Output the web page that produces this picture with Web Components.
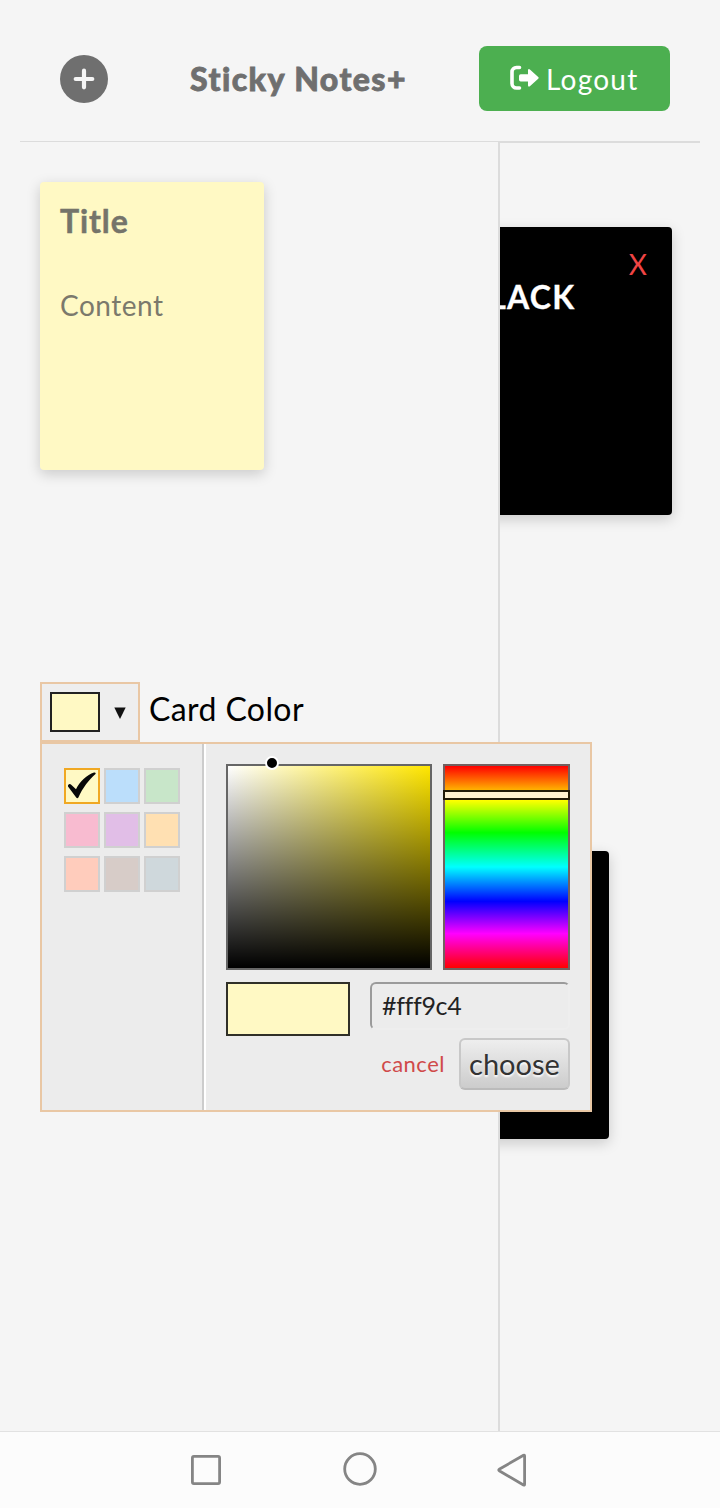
<!DOCTYPE html>
<html lang="en">
<head>
<meta charset="utf-8">
<title>Sticky Notes+</title>
<style>
body { margin: 0; background: #f5f5f5; font-family: Lato, "Noto Sans", sans-serif; }
</style>
</head>
<body>
<sticky-app></sticky-app>
<script>
const define = (name, html, setup) => {
  const template = document.createElement('template');
  template.innerHTML = html;
  customElements.define(name, class extends HTMLElement {
    constructor() {
      super();
      this.attachShadow({ mode: 'open' }).append(template.content.cloneNode(true));
    }
    connectedCallback() { if (setup) setup(this, this.shadowRoot); }
  });
};

define('app-header', `
<style>
:host { display: flex; box-sizing: border-box; height: 142px; margin: 0 20px; padding: 46px 30px 0 40px;
  justify-content: space-between; align-items: flex-start; border-bottom: 1px solid #dcdcdc; }
.add { width: 48px; height: 48px; margin-top: 9px; display: block; }
h1 { margin: 13px 0 0 10px; font-size: 32px; line-height: 40px; font-weight: 900; color: #6f6f6f; white-space: nowrap; letter-spacing: 1.42px; -webkit-text-stroke: .8px #6f6f6f; }
button { all: unset; box-sizing: border-box; width: 191px; height: 65px; border-radius: 8px; background: #4caf50; color: #fff;
  display: flex; align-items: center; padding-left: 31px; font-size: 28px; line-height: 36px; gap: 7px; white-space: nowrap; letter-spacing: 1.25px; }
button svg { width: 29px; height: 26px; margin-top: -2px; flex: none; }
</style>
<svg class="add" viewBox="0 0 48 48"><circle cx="24" cy="24" r="24" fill="#6f6f6f"/><path d="M24 15.7v16.6M15.7 24h16.6" stroke="#f5f5f5" stroke-width="4.2" stroke-linecap="round"/></svg>
<h1>Sticky Notes+</h1>
<button><svg viewBox="0 0 29 26"><path d="M9.5 2.5H6.5a4.5 4.5 0 0 0-4.5 4.5v11.500a4.500 4.500 0 0 0 4.500 4.500h3" fill="none" stroke="#fff" stroke-width="3.6" stroke-linecap="round"/><path d="M10.700 9.300h7.300V5.200q.3-1.800 1.900-.7l8.300 7.400q1 .9 0 1.900l-8.300 7.500q-1.600 1-1.900-.7v-4.200h-7.300q-1.700 0-1.700-1.700v-3.700q0-1.700 1.700-1.700z" fill="#fff"/></svg><span>Logout</span></button>`);

define('note-card', `
<style>
:host { display: block; box-sizing: border-box; width: 224px; height: 288px; border-radius: 4px; padding: 20px;
  background: var(--note, #fff9c4); box-shadow: 0 4px 14px rgba(0,0,0,.18); }
</style>
<slot></slot>`);

define('notes-board', `
<style>
:host { display: block; position: relative; overflow: hidden; }
.edge { height: 1px; margin-right: 20px; background: #dcdcdc; }
note-card { position: absolute; --note: #000; }
.first { left: -52px; top: 85px; }
.second { left: -115px; top: 709px; }
.close { display: block; text-align: right; color: #ef4444; font-size: 28px; line-height: 36px; padding-right: 5px; margin-top: -1px; }
h2 { margin: -4px 0 0 -1px; color: #fff; font-size: 32px; line-height: 38px; font-weight: 700; white-space: nowrap; letter-spacing: 1.2px; -webkit-text-stroke: .3px #fff; }
</style>
<div class="edge"></div>
<note-card class="first"><span class="close">X</span><h2>BLACK</h2></note-card>
<note-card class="second"></note-card>`);

define('color-palette', `
<style>
:host { display: grid; box-sizing: border-box; width: 160px; padding: 24px 22px; grid-template-columns: repeat(3, 36px);
  grid-auto-rows: 36px; gap: 8px 4px; align-content: start; }
i { box-sizing: border-box; border: 2px solid #d0d0d0; display: block; }
i.on { border-color: #f0a823; }
svg { display: block; width: 32px; height: 32px; }
</style>`, (host, root) => {
  ['#fff9c4', '#bbdefb', '#c8e6c9', '#f8bbd0', '#e1bee7', '#ffe0b2', '#ffccbc', '#d7ccc8', '#cfd8dc'].forEach((c, n) => {
    const cell = document.createElement('i');
    cell.style.background = c;
    if (!n) {
      cell.className = 'on';
      cell.innerHTML = '<svg viewBox="0 0 32 32"><path d="M2 15.200q1.500-2 3.200-.5l4.800 4.500C14 11.500 21 5 28 2.600q2.500-.3 1.500 1.500C23 10 16.500 18 12.400 27.500q-1.100 1.500-2.200 0Q6.500 22.500 2 16.500z" fill="#080808"/></svg>';
    }
    root.append(cell);
  });
});

define('color-popup', `
<style>
:host { display: flex; box-sizing: border-box; width: 552px; height: 370px; border: 2px solid #e9c7a4; background: #ececec; }
.picker { flex: 1; box-sizing: border-box; border-left: 2px solid #fff; box-shadow: -2px 0 0 #ccc; margin-left: 2px;
  padding: 20px; display: grid; grid-template-columns: 206px 127px; grid-template-rows: 206px 108px; gap: 12px 11px; }
.sat, .hue { box-sizing: border-box; border: 2px solid #666; position: relative; }
.sat { background: linear-gradient(to top, #000, transparent), linear-gradient(to right, #fff, #ffe600); background-origin: padding-box; }
.hue { border-color: #73605f; background: linear-gradient(#f00 0%, #ff0 17%, #0f0 33%, #0ff 50%, #00f 67%, #f0f 83%, #f00 100%); }
.dot { position: absolute; left: 37px; top: -10px; width: 10px; height: 10px; border: 2px solid #fff; border-radius: 50%; background: #000; }
.bar { position: absolute; box-sizing: border-box; left: -2px; right: -2px; top: 24px; height: 10px; border: 2px solid #211a08; background: #fff1cf; }
.bottom { grid-column: 1 / 3; display: flex; justify-content: space-between; align-items: flex-start; }
.preview { box-sizing: border-box; width: 124px; height: 54px; border: 2px solid #303028; background: #fff9c4; }
.side { width: 200px; }
.hex { box-sizing: border-box; height: 48px; border: 2px solid; border-color: #9b9b9b #eee #eee #9b9b9b; border-radius: 6px;
  padding: 3px 10px; font-size: 25px; line-height: 37px; color: #222; white-space: nowrap; letter-spacing: -.35px; }
.buttons { display: flex; justify-content: flex-end; align-items: center; margin-top: 8px; gap: 14px; }
.cancel { color: #d04a4a; font-size: 22px; line-height: 30px; white-space: nowrap; letter-spacing: .5px; }
.choose { box-sizing: border-box; width: 111px; height: 52px; border: 2px solid #c8c8c8; border-bottom-color: #bbb; border-radius: 6px;
  background: linear-gradient(#eee, #ccc); color: #333; text-shadow: 0 2px 2px #fff; font-size: 29px; line-height: 47px; text-align: center; white-space: nowrap; }
</style>
<color-palette></color-palette>
<div class="picker">
  <div class="sat"><div class="dot"></div></div>
  <div class="hue"><div class="bar"></div></div>
  <div class="bottom">
    <div class="preview"></div>
    <div class="side">
      <div class="hex"><span>#fff9c4</span></div>
      <div class="buttons"><span class="cancel">cancel</span><div class="choose"><span>choose</span></div></div>
    </div>
  </div>
</div>`);

define('color-field', `
<style>
:host { display: flex; position: relative; z-index: 2; height: 60px; gap: 9px; }
.trigger { box-sizing: border-box; width: 100px; height: 60px; border: 2px solid #e9c7a4; background: #eee; display: flex; padding: 8px; gap: 14px; }
.now { box-sizing: border-box; width: 50px; height: 40px; border: 2px solid #222; background: #fff9c4; }
.trigger svg { width: 12px; height: 12px; margin-top: 15px; }
.label { font-size: 32px; line-height: 40px; margin-top: 7px; color: #000; white-space: nowrap; letter-spacing: .4px; }
color-popup { position: absolute; left: 0; top: 60px; }
</style>
<div class="trigger"><div class="now"></div><svg viewBox="0 0 12 12"><path d="M.3.500h11.400L6 12z" fill="#111"/></svg></div>
<span class="label">Card Color</span>
<color-popup></color-popup>`);

define('note-editor', `
<style>
:host { display: block; box-sizing: border-box; border-right: 2px solid #dcdcdc; padding: 40px 0 0 40px; }
h2 { margin: -1px 0 0; font-size: 32px; line-height: 40px; font-weight: 700; color: #75746a; letter-spacing: .9px; -webkit-text-stroke: .5px #75746a; }
p { margin: 46px 0 0; font-size: 28px; line-height: 36px; color: #7b796c; letter-spacing: .5px; }
color-field { margin-top: 212px; }
</style>
<note-card><h2>Title</h2><p>Content</p></note-card>
<color-field></color-field>`);

define('system-nav', `
<style>
:host { display: grid; box-sizing: border-box; height: 77px; border-top: 1px solid #e2e2e2; background: #fcfcfc; grid-template-columns: repeat(3, 154px);
  justify-content: center; justify-items: center; align-items: start; padding-top: 19px; }
svg { width: 40px; height: 40px; fill: none; stroke: #858585; stroke-width: 2.800; stroke-linejoin: round; }
</style>
<svg viewBox="0 0 40 40"><rect x="6.400" y="5.400" width="27.200" height="27.200" rx="1.500"/></svg>
<svg viewBox="0 0 40 40"><circle cx="20" cy="18" r="15.300"/></svg>
<svg viewBox="0 0 40 40"><path d="M5.200 18.300Q4.300 19 5.200 19.700L29.500 34Q30.600 34.400 30.600 33.200V5Q30.600 3.700 29.500 4.300z"/></svg>`);

define('sticky-app', `
<style>
:host { display: flex; flex-direction: column; width: 720px; height: 1508px; overflow: hidden; background: #f5f5f5; }
main { flex: 1; min-height: 0; display: grid; grid-template-columns: 500px 220px; }
</style>
<app-header></app-header>
<main><note-editor></note-editor><notes-board></notes-board></main>
<system-nav></system-nav>`);
</script>
</body>
</html>
